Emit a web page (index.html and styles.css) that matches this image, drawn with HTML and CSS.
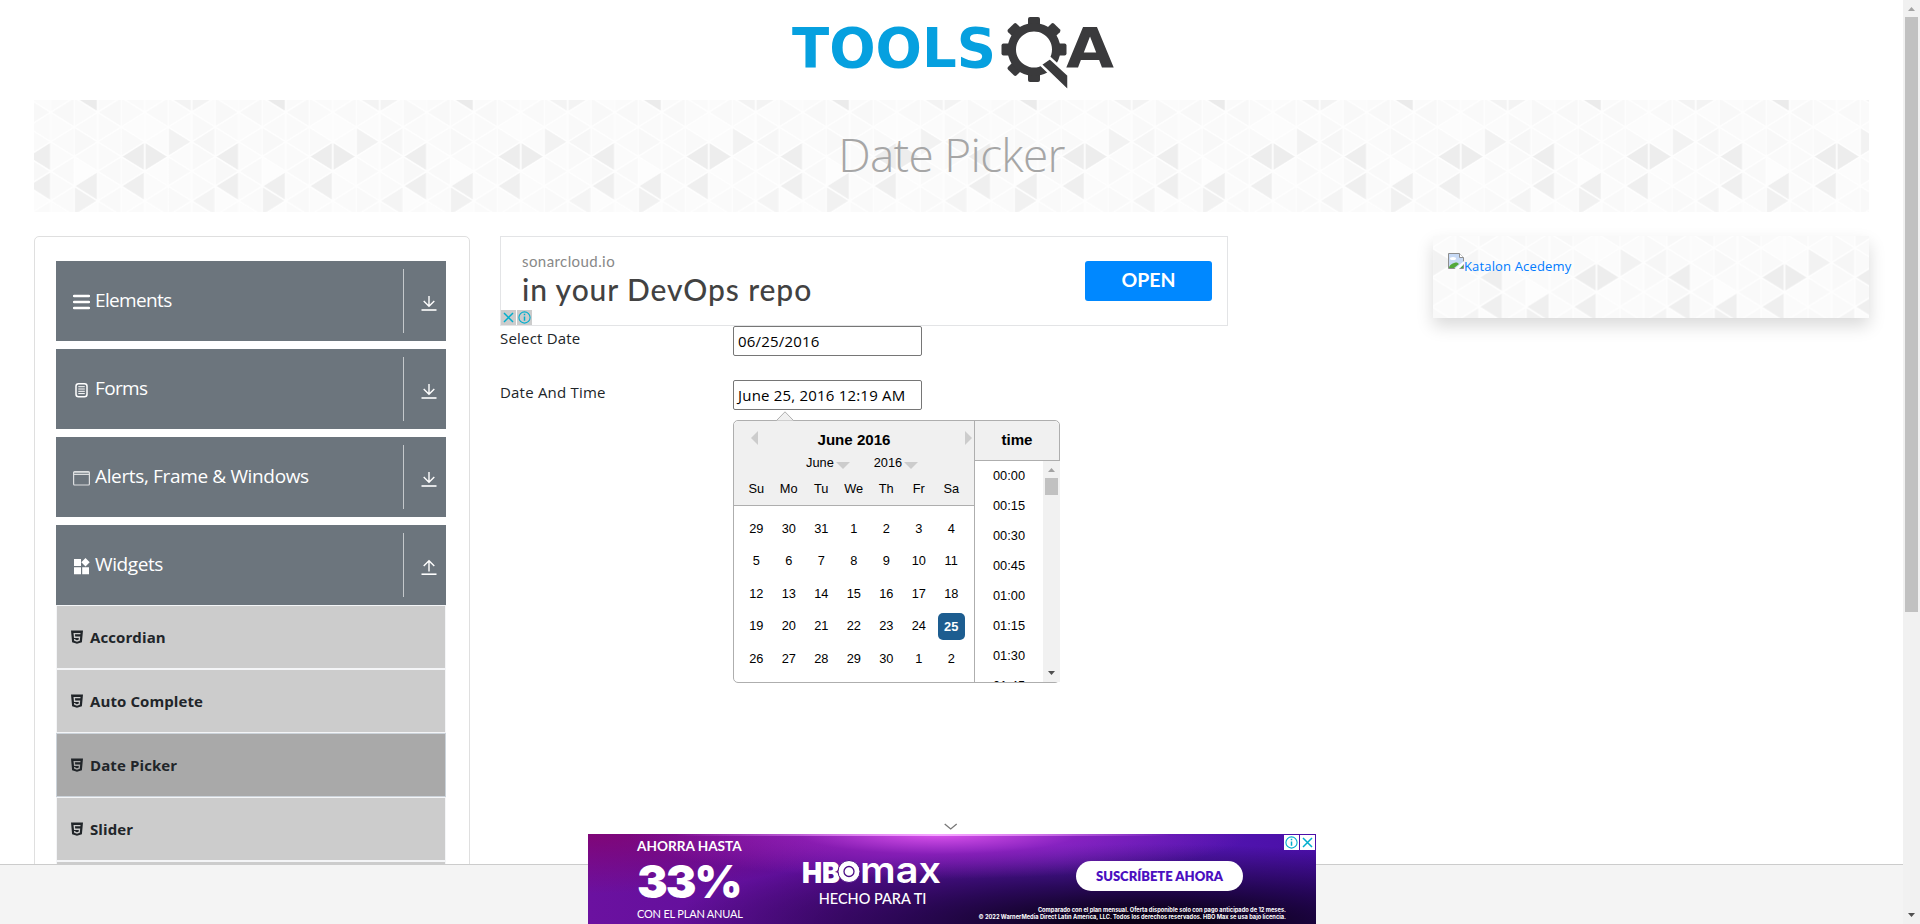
FILE: index.html
```html
<!DOCTYPE html>
<html lang="en">
<head>
<meta charset="utf-8">
<title>ToolsQA - Date Picker</title>
<link rel="stylesheet" href="styles.css">
</head>
<body>
<svg class="defs" aria-hidden="true">
  <defs>
    <pattern id="tri" width="188" height="147.5" patternUnits="userSpaceOnUse" patternTransform="translate(16.7 -9.8)"></pattern>
    <pattern id="tri-card" width="188" height="147.5" patternUnits="userSpaceOnUse" patternTransform="translate(69.5 -25)"></pattern>
    <symbol id="down" viewBox="0 0 16 17"><path d="M8 1v10M2.7 6 8 11.2 13.3 6" fill="none" stroke="#fff" stroke-width="1.4"/><path d="M.5 15h15" stroke="#fff" stroke-width="1.6"/></symbol>
    <symbol id="up" viewBox="0 0 16 17"><path d="M8 12.5V2M2.7 7 8 1.8 13.3 7" fill="none" stroke="#fff" stroke-width="1.4"/><path d="M.5 15.2h15" stroke="#fff" stroke-width="1.6"/></symbol>
    <symbol id="html5" viewBox="0 0 12 14"><path fill="#212529" fill-rule="evenodd" d="M0 .5h12l-1.100 11.700L6 13.800l-4.900-1.600zM2.500 3l.5 4.900h4.800l-.2 1.900-1.600.5-1.600-.5-.1-.8H3l.2 1.800L6 11.700l2.800-.9.4-4.300H4.200L4 4.300h5.400L9.500 3z"/></symbol>
    <symbol id="info" viewBox="0 0 15 15"><circle cx="7.5" cy="7.5" r="5.6" fill="none" stroke="#00aecd" stroke-width="1.1"/><path d="M7.5 6.4v4.4M7.5 3.8v1.5" stroke="#00aecd" stroke-width="1.5"/></symbol>
    <symbol id="close" viewBox="0 0 15 15"><path d="m3 3 9 9M12 3l-9 9" stroke="#00aecd" stroke-width="1.5"/></symbol>
  </defs>
</svg>
<div class="window">
  <div class="view">
    <header class="top">
      <svg class="logo" width="324" height="80" viewBox="0 0 324 80">
        <text class="word" x="2" y="55" textLength="204" lengthAdjust="spacingAndGlyphs">TOOLS</text>
        <g fill="#3a3a3c" transform="translate(1.500 0)">
          <g id="gear"></g>
          <path fill-rule="evenodd" d="M242.500 11a26.500 26.500 0 1 0 .01 0zm0 8.500a18 18 0 1 1-.01 0z"/>
          <path d="m258.500 46 18.500 17v16.500l-28-27z" stroke="#fff" stroke-width="2.500"/>
        </g>
        <text class="letter" x="276" y="55" textLength="48" lengthAdjust="spacingAndGlyphs">A</text>
      </svg>
    </header>
    <section class="banner">
      <svg class="fill" width="1835" height="112"><rect width="1835" height="112" fill="url(#tri)"/></svg>
      <h1>Date Picker</h1>
    </section>
    <main class="columns">
      <nav class="side">
        <div class="group"><svg class="gi" viewBox="0 0 17 17"><path d="M1 2h15M1 8h15M1 14h15" stroke="#fff" stroke-width="2.400" stroke-linecap="round"/></svg><span>Elements</span><i><svg><use href="#down"/></svg></i></div>
        <div class="group"><svg class="gi" viewBox="0 0 17 17"><rect x="3" y="1.700" width="11" height="13" rx="2.500" fill="none" stroke="#fff" stroke-width="1.500"/><path d="M5.300 4.700h6.500M5.300 7h6.500M5.300 9.300h6.500M5.300 11.600h6.500" stroke="#fff" stroke-width="1"/></svg><span>Forms</span><i><svg><use href="#down"/></svg></i></div>
        <div class="group wide"><svg class="gi" viewBox="0 0 17 17"><rect x=".6" y="1.600" width="15.800" height="13.400" rx="1" fill="none" stroke="#dcdee0" stroke-width="1.200"/><path d="M1 2.800h15M1 4.500h15" stroke="#dcdee0" stroke-width="1"/></svg><span>Alerts, Frame &amp; Windows</span><i><svg><use href="#down"/></svg></i></div>
        <div class="group open"><svg class="gi" viewBox="0 0 17 17"><path d="M1 1h7v7H1zM1 9.200h7v7H1zM9.200 9.200h6.800v7H9.200zM12.500 0l4.200 4.200-4.200 4.200-4.200-4.200z" fill="#fff"/></svg><span>Widgets</span><i><svg><use href="#up"/></svg></i></div>
        <ul>
          <li><svg><use href="#html5"/></svg>Accordian</li>
          <li><svg><use href="#html5"/></svg>Auto Complete</li>
          <li class="active"><svg><use href="#html5"/></svg>Date Picker</li>
          <li><svg><use href="#html5"/></svg>Slider</li>
          <li></li>
        </ul>
      </nav>
      <section class="content">
        <div class="ad">
          <div class="ad-copy"><span class="site">sonarcloud.io</span><span class="headline">in your DevOps repo</span></div>
          <div class="ad-open">OPEN</div>
          <div class="ad-choices"><svg><use href="#close"/></svg><svg><use href="#info"/></svg></div>
        </div>
        <div class="row"><label>Select Date</label><div class="field">06/25/2016</div></div>
        <div class="row"><label>Date And Time</label><div class="field">June 25, 2016 12:19 AM</div></div>
        <div class="picker">
          <svg class="tip" width="18" height="10"><path d="M.5 9.500 9 .8l8.500 8.700" fill="#f0f0f0" stroke="#aeaeae"/></svg>
          <div class="month">
            <div class="head">
              <div class="title"><b class="prev"></b><span>June 2016</span><b class="next"></b></div>
              <div class="selects"><span>June<em></em></span><span>2016<em></em></span></div>
              <div class="week"><span>Su</span><span>Mo</span><span>Tu</span><span>We</span><span>Th</span><span>Fr</span><span>Sa</span></div>
            </div>
            <div class="days">
              <span>29</span><span>30</span><span>31</span><span>1</span><span>2</span><span>3</span><span>4</span>
              <span>5</span><span>6</span><span>7</span><span>8</span><span>9</span><span>10</span><span>11</span>
              <span>12</span><span>13</span><span>14</span><span>15</span><span>16</span><span>17</span><span>18</span>
              <span>19</span><span>20</span><span>21</span><span>22</span><span>23</span><span>24</span><span class="sel">25</span>
              <span>26</span><span>27</span><span>28</span><span>29</span><span>30</span><span>1</span><span>2</span>
            </div>
          </div>
          <div class="time">
            <div class="time-head">time</div>
            <div class="time-body">
              <div class="times"><span>00:00</span><span>00:15</span><span>00:30</span><span>00:45</span><span>01:00</span><span>01:15</span><span>01:30</span><span>01:45</span></div>
              <div class="bar"><svg width="17" height="17"><path d="M5 11h7L8.500 7z" fill="#a3a3a3"/></svg><div class="thumb small"></div><svg class="end" width="17" height="17"><path d="M5 6h7L8.500 10z" fill="#505050"/></svg></div>
            </div>
          </div>
        </div>
      </section>
      <aside class="card">
        <svg class="fill" width="436" height="82"><rect width="436" height="82" fill="url(#tri-card)"/></svg>
        <svg class="broken" width="16" height="16"><path d="M.5.500h11l4 4v11H.5z" fill="#c6d9f5" stroke="#8e8e8e"/><path d="M11.500.500v4h4" fill="#fff" stroke="#8e8e8e"/><ellipse cx="5" cy="5.500" rx="3" ry="1.500" fill="#fff"/><path d="M1 15c0-3 4-5.500 8-5.500l2 1.500-5 4zM12 15l3-3v3z" fill="#53a83a"/><path d="M6.500 16 16 8v3l-5 5z" fill="#fff"/></svg>
        <a>Katalon Acedemy</a>
      </aside>
    </main>
    <footer></footer>
    <div class="anchor-ad">
      <div class="toggle"><svg width="14" height="8"><path d="m.7 1 6 5 6-5" fill="none" stroke="#777" stroke-width="1.300"/></svg></div>
      <div class="promo">
        <div class="deal"><span class="t1">AHORRA HASTA</span><span class="t2">33%</span><span class="t3">CON EL PLAN ANUAL</span></div>
        <div class="brand">
          <svg width="145" height="26" viewBox="0 0 145 26">
            <text class="hb" x="0" y="23.500" textLength="38" lengthAdjust="spacingAndGlyphs">HB</text>
            <circle cx="47" cy="12.500" r="11" fill="#fff" stroke="#4a0c85" stroke-width="1"/><circle cx="47" cy="12.500" r="5" fill="#fff" stroke="#4a0c85" stroke-width="1.300"/>
            <text class="mx" x="58" y="23.500" textLength="81" lengthAdjust="spacingAndGlyphs">max</text>
          </svg>
          <span>HECHO PARA TI</span>
        </div>
        <div class="offer"><div class="cta">SUSCRÍBETE AHORA</div><p>Comparado con el plan mensual. Oferta disponible solo con pago anticipado de 12 meses.</p><p>© 2022 WarnerMedia Direct Latin America, LLC. Todos los derechos reservados. HBO Max se usa bajo licencia.</p></div>
        <div class="promo-choices"><svg><use href="#info"/></svg><svg><use href="#close"/></svg></div>
      </div>
    </div>
  </div>
  <div class="bar page-bar"><svg width="17" height="17"><path d="M5 11h7L8.500 7z" fill="#a3a3a3"/></svg><div class="thumb"></div><svg class="end" width="17" height="17"><path d="M5 6h7L8.500 10z" fill="#505050"/></svg></div>
</div>
<script src="script.js"></script>
</body>
</html>
```
FILE: styles.css
```css
* { box-sizing: border-box; }
body { margin: 0; background: #fff; color: #212529; font: 15px/24px "Open Sans", "Noto Sans", sans-serif; overflow: hidden; }
.defs { position: absolute; width: 0; height: 0; }
.window { display: flex; height: 924px; }
.view { position: relative; width: 1903px; height: 924px; overflow: hidden; }
.fill { position: absolute; inset: 0; }

.top { height: 100px; display: flex; justify-content: center; padding-top: 12px; }
.word { font: bold 56px "DejaVu Sans", sans-serif; fill: #06a0df; }
.letter { font: bold 56px "DejaVu Sans", sans-serif; fill: #3a3a3c; }

.banner { position: relative; height: 112px; width: 1835px; margin: 0 34px; text-align: center; }
.banner h1 { position: relative; margin: 0; font-weight: 300; font-size: 46px; line-height: 109px; color: #a6a6a6; letter-spacing: -.7px; }

.columns { display: flex; align-items: flex-start; margin: 24px 34px 0; }
.side { width: 436px; height: 760px; border: 1px solid #dfdfdf; border-radius: 5px; padding: 24px 22px 0 21px; flex: none; }
.group { display: flex; align-items: center; height: 80px; background: #6c757d; color: #fff; font-size: 19px; margin-bottom: 8px; padding-left: 17px; width: 390px; letter-spacing: -.65px; }
.group.wide { letter-spacing: -.35px; }
.group > span { padding-bottom: 2px; }
.group.open { margin-bottom: 0; letter-spacing: -.4px; }
.gi { width: 17px; height: 17px; margin: 3px 5px 0 0; }
.group i { margin-left: auto; height: 64px; width: 43px; border-left: 1px solid #c4c8cb; display: flex; align-items: center; padding: 5px 0 0 17px; }
.group i svg { width: 16px; height: 17px; }
ul { list-style: none; margin: 0; padding: 0; width: 390px; }
li { height: 64px; background: #ccc; border: 1px solid #f4f5f7; display: flex; align-items: center; font-weight: 700; padding-left: 14px; letter-spacing: .1px; }
li.active { background: #a9a9a9; border-color: #ccd3da; }
li svg { width: 12px; height: 14px; margin-right: 7px; }

.content { margin-left: 30px; width: 933px; flex: none; }
.ad { position: relative; width: 728px; height: 90px; border: 1px solid #e3e4e6; display: flex; justify-content: space-between; padding: 12px 15px 0 21px; }
.ad-copy { display: flex; flex-direction: column; color: #424242; }
.site { font: 15px/24px Lato, sans-serif; color: #888; letter-spacing: .42px; }
.headline { font: 500 30px/33px Lato, sans-serif; letter-spacing: .9px; }
.ad-open { margin-top: 12px; width: 127px; height: 40px; border-radius: 3px; background: #08f; color: #fff; font: 700 19.500px/38px Lato, sans-serif; text-align: center; }
.ad-choices { position: absolute; left: 0; bottom: 0; display: flex; gap: 1px; }
.ad-choices svg { width: 15px; height: 15px; background: #ccc; }
.row { display: flex; height: 54px; letter-spacing: .2px; }
.row label { width: 233px; }
.field { width: 189px; height: 30px; border: 1px solid #767676; border-radius: 2px; color: #000; padding: 2px 4px; white-space: nowrap; }

.picker { position: relative; display: flex; margin: -14px 0 0 233px; width: 327px; height: 263px; border: 1px solid #aeaeae; border-radius: 5px; font: 12.8px/20px "Liberation Sans", Arial, sans-serif; color: #000; }
.tip { position: absolute; left: 42px; top: -10px; }
.month { width: 241px; border-right: 1px solid #aeaeae; flex: none; }
.head { height: 85px; background: #f0f0f0; border-bottom: 1px solid #aeaeae; border-radius: 5px 0 0; padding-top: 8px; }
.title { display: flex; justify-content: space-between; align-items: center; padding: 0 2px 0 17px; font-weight: 700; font-size: 15.1px; height: 22px; }
.prev, .next { border: 7px solid transparent; margin-bottom: 4px; }
.prev { border-left: 0; border-right-color: #ccc; }
.next { border-right: 0; border-left-color: #ccc; }
.title span { margin-right: 15px; }
.selects { display: flex; gap: 24px; padding-left: 72px; height: 22px; line-height: 23px; }
.selects em { display: inline-block; border: 7.500px solid transparent; border-top-color: #ccc; border-bottom: 0; margin-left: 2px; vertical-align: -2px; }
.week, .days { display: grid; grid-template-columns: repeat(7, 32.500px); padding-left: 6px; text-align: center; }
.week { line-height: 31px; }
.days { padding-top: 6.600px; grid-auto-rows: 32.500px; line-height: 32.500px; }
.sel { width: 27px; height: 27px; margin: 2.700px; border-radius: 5px; background: #1d5d90; color: #fff; font-weight: 700; line-height: 27px; }
.time { width: 84px; flex: none; }
.time-head { height: 40px; background: #f0f0f0; border-bottom: 1px solid #aeaeae; border-radius: 0 5px 0 0; font-weight: 700; font-size: 15.100px; line-height: 38px; text-align: center; }
.time-body { display: flex; width: 85px; height: 221px; overflow: hidden; }
.times { width: 68px; text-align: center; }
.times span { display: block; height: 30px; line-height: 29px; }
.bar { width: 17px; background: #f1f1f1; display: flex; flex-direction: column; flex: none; }
.thumb { width: 13px; height: 595px; margin-left: 2px; background: #c1c1c1; flex: none; }
.thumb.small { height: 17px; }
.bar .end { margin-top: auto; }
.page-bar { height: 924px; }

.card { position: relative; width: 436px; height: 82px; box-shadow: 0 8px 16px rgba(0,0,0,.15); padding: 17px 15px; display: flex; flex: none; font-size: 13px; }
.card .broken, .card a { position: relative; }
.card a { color: #007bff; line-height: 26px; letter-spacing: .15px; }

footer { position: absolute; left: 0; right: 0; top: 864px; height: 60px; background: #f4f4f4; border-top: 1px solid #ccc; }
.anchor-ad { position: absolute; left: 588px; bottom: 0; width: 728px; }
.toggle { height: 20px; display: flex; padding: 9px 0 0 356px; }
.promo { position: relative; height: 90px; display: flex; color: #fff; overflow: hidden;
  background: radial-gradient(ellipse 310px 45px at 350px 0, rgba(224,85,240,.95), rgba(170,40,200,.55) 45%, transparent), radial-gradient(ellipse 260px 60px at 0 0, rgba(130,5,115,.9), transparent), radial-gradient(ellipse 480px 80px at 560px 100%, rgba(10,0,22,1) 12%, rgba(15,0,40,.65) 50%, transparent), linear-gradient(90deg, #6b11a0, #5b0e98 35%, #5b1bb8 65%, #4a0fa8); }
.promo::before { content: ""; position: absolute; left: 0; right: 0; top: 0; height: 2px; background: linear-gradient(90deg, transparent 12%, #f5a5ff 48%, transparent 80%); }
.deal { width: 106px; margin-left: 49px; display: flex; flex-direction: column; white-space: nowrap; }
.t1 { font: 700 13.600px/24px Lato, sans-serif; }
.t2 { font: 900 46px/46px Inter, sans-serif; letter-spacing: -2px; height: 46px; }
.t3 { font: 11px/20px Lato, sans-serif; letter-spacing: -.2px; }
.brand { margin: 25px 0 0 59px; width: 145px; display: flex; flex-direction: column; text-align: center; font: 500 14.500px/24px Lato, sans-serif; }
.brand svg { overflow: visible; }
.brand span { padding: 2px 4px 0 0; }
.hb { font: 900 29px Inter, sans-serif; fill: #fff; }
.mx { font: 600 37px Inter, sans-serif; fill: #fff; }
.offer { margin: 27px 0 0 22px; width: 317px; display: flex; flex-direction: column; align-items: flex-end; }
.cta { width: 167px; height: 30px; margin: 0 43px 15px 0; border-radius: 15px; background: #fff; color: #4b0fc0; font: 800 13px/30px Lato, sans-serif; text-align: center; }
.offer p { margin: 0; font: 700 5.700px/7px Inter, sans-serif; white-space: nowrap; }
.promo-choices { position: absolute; right: 1px; top: 1px; display: flex; gap: 1px; }
.promo-choices svg { width: 15px; height: 15px; background: #fff; }
```
FILE: script.js
```js
// Triangle mosaic used by the banner and the side card: 8 columns by 10 half-steps.
const NS = "http://www.w3.org/2000/svg";
const shades = [
  "faebfafafbf3f3fb",
  "f8faf8faf9fafbf8",
  "fbfafafcfcfbf9fa",
  "faf8faf9fbf2f6fa",
  "fbfafaededfbf9ee",
  "f9fdf9fafcf9fbf8",
  "faeffbeffbfbfaef",
  "faf1f9fbfaf9f4fc",
  "fcfcfafafcfafafa",
  "faf9fbfaf9fbfaf9"
];
const w = 23.5, h = 14.75;

// One column-wide triangle; its tip is on the left or the right edge of the column.
function triangle(c, r) {
  const y = r * h + 7.35;
  const left = (c + r + 9) % 2 === 0;
  const a = c * w, b = a + w;
  const tip = left ? a : b, base = left ? b : a;
  const p = document.createElementNS(NS, "polygon");
  p.setAttribute("points", `${tip},${y} ${base},${y - h} ${base},${y + h}`);
  return p;
}

for (const id of ["tri", "tri-card"]) {
  const pattern = document.getElementById(id);
  const lines = [];
  for (let r = -1; r <= 10; r++) {
    for (let c = 0; c < 8; c++) {
      const v = shades[(r + 10) % 10].slice(c * 2, c * 2 + 2);
      const fill = triangle(c, r);
      fill.setAttribute("fill", "#" + v + v + v);
      pattern.appendChild(fill);
      const line = triangle(c, r);
      line.setAttribute("fill", "none");
      line.setAttribute("stroke", "#fefefe");
      line.setAttribute("stroke-width", "1.3");
      lines.push(line);
    }
  }
  lines.forEach(l => pattern.appendChild(l));
}

// Eight gear teeth round the logo ring; the one under the handle is left out.
const gear = document.getElementById("gear");
for (let i = 0; i < 8; i++) {
  if (i === 3) continue;
  const t = document.createElementNS(NS, "rect");
  t.setAttribute("x", 236.5); t.setAttribute("y", 5);
  t.setAttribute("width", 12); t.setAttribute("height", 12);
  t.setAttribute("rx", 2);
  t.setAttribute("transform", `rotate(${i * 45} 242.5 37.5)`);
  gear.appendChild(t);
}
```
